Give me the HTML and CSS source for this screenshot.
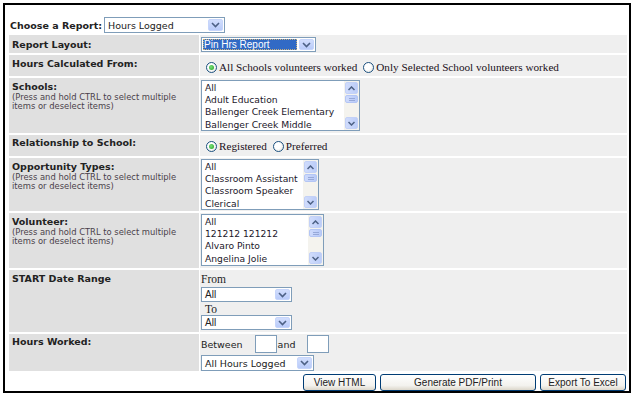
FILE: index.html
```html
<!DOCTYPE html>
<html lang="en">
<head>
    <meta charset="UTF-8">
    <title>Hours Logged Report</title>
    <link rel="stylesheet" href="styles.css">
</head>
<body>
    <div class="frame">
        <div class="choose">
            <span class="choose-label">Choose a Report:</span>
            <div class="dropdown dd-report">
                <span class="dd-value">Hours Logged</span>
                <span class="dd-arrow"><svg width="9" height="6" viewBox="0 0 9 6"><path d="M1 1 L4.5 4.5 L8 1" fill="none" stroke="#4d6185" stroke-width="1.6"/></svg></span>
            </div>
        </div>

        <table class="report-form">
            <colgroup>
                <col class="col-label">
                <col class="col-field">
            </colgroup>
            <tr class="r-layout">
                <th>Report Layout:</th>
                <td>
                    <div class="dropdown dd-layout">
                        <span class="dd-value"><span class="picked">Pin Hrs Report</span></span>
                        <span class="dd-arrow"><svg width="9" height="6" viewBox="0 0 9 6"><path d="M1 1 L4.5 4.5 L8 1" fill="none" stroke="#4d6185" stroke-width="1.6"/></svg></span>
                    </div>
                </td>
            </tr>
            <tr class="r-calc">
                <th>Hours Calculated From:</th>
                <td>
                    <div class="radios">
                        <span class="radio on"></span><span class="radio-text">All Schools volunteers worked</span>
                        <span class="radio"></span><span class="radio-text">Only Selected School volunteers worked</span>
                    </div>
                </td>
            </tr>
            <tr class="r-schools">
                <th>Schools:<span class="hint">(Press and hold CTRL to select multiple items or deselect items)</span></th>
                <td>
                    <div class="listbox lb-schools">
                        <ul class="lb-items">
                            <li>All</li>
                            <li>Adult Education</li>
                            <li>Ballenger Creek Elementary</li>
                            <li>Ballenger Creek Middle</li>
                        </ul>
                        <div class="lb-scroll">
                            <span class="sb-btn"><svg width="7" height="5" viewBox="0 0 7 5"><path d="M0.5 4 L3.5 1 L6.5 4" fill="none" stroke="#4d6185" stroke-width="1.5"/></svg></span>
                            <span class="sb-thumb"></span>
                            <span class="sb-track"></span>
                            <span class="sb-btn"><svg width="7" height="5" viewBox="0 0 7 5"><path d="M0.5 1 L3.5 4 L6.5 1" fill="none" stroke="#4d6185" stroke-width="1.5"/></svg></span>
                        </div>
                    </div>
                </td>
            </tr>
            <tr class="r-rel">
                <th>Relationship to School:</th>
                <td>
                    <div class="radios">
                        <span class="radio on"></span><span class="radio-text">Registered</span>
                        <span class="radio"></span><span class="radio-text">Preferred</span>
                    </div>
                </td>
            </tr>
            <tr class="r-opp">
                <th>Opportunity Types:<span class="hint">(Press and hold CTRL to select multiple items or deselect items)</span></th>
                <td>
                    <div class="listbox lb-opp">
                        <ul class="lb-items">
                            <li>All</li>
                            <li>Classroom Assistant</li>
                            <li>Classroom Speaker</li>
                            <li>Clerical</li>
                        </ul>
                        <div class="lb-scroll">
                            <span class="sb-btn"><svg width="7" height="5" viewBox="0 0 7 5"><path d="M0.5 4 L3.5 1 L6.5 4" fill="none" stroke="#4d6185" stroke-width="1.5"/></svg></span>
                            <span class="sb-thumb"></span>
                            <span class="sb-track"></span>
                            <span class="sb-btn"><svg width="7" height="5" viewBox="0 0 7 5"><path d="M0.5 1 L3.5 4 L6.5 1" fill="none" stroke="#4d6185" stroke-width="1.5"/></svg></span>
                        </div>
                    </div>
                </td>
            </tr>
            <tr class="r-vol">
                <th>Volunteer:<span class="hint">(Press and hold CTRL to select multiple items or deselect items)</span></th>
                <td>
                    <div class="listbox lb-vol">
                        <ul class="lb-items">
                            <li>All</li>
                            <li>121212 121212</li>
                            <li>Alvaro Pinto</li>
                            <li>Angelina Jolie</li>
                        </ul>
                        <div class="lb-scroll">
                            <span class="sb-btn"><svg width="7" height="5" viewBox="0 0 7 5"><path d="M0.5 4 L3.5 1 L6.5 4" fill="none" stroke="#4d6185" stroke-width="1.5"/></svg></span>
                            <span class="sb-thumb"></span>
                            <span class="sb-track"></span>
                            <span class="sb-btn"><svg width="7" height="5" viewBox="0 0 7 5"><path d="M0.5 1 L3.5 4 L6.5 1" fill="none" stroke="#4d6185" stroke-width="1.5"/></svg></span>
                        </div>
                    </div>
                </td>
            </tr>
            <tr class="r-date">
                <th>START Date Range</th>
                <td>
                    <div class="serif-label">From</div>
                    <div class="dropdown dd-date">
                        <span class="dd-value">All</span>
                        <span class="dd-arrow"><svg width="9" height="6" viewBox="0 0 9 6"><path d="M1 1 L4.5 4.5 L8 1" fill="none" stroke="#4d6185" stroke-width="1.6"/></svg></span>
                    </div>
                    <div class="serif-label to">To</div>
                    <div class="dropdown dd-date">
                        <span class="dd-value">All</span>
                        <span class="dd-arrow"><svg width="9" height="6" viewBox="0 0 9 6"><path d="M1 1 L4.5 4.5 L8 1" fill="none" stroke="#4d6185" stroke-width="1.6"/></svg></span>
                    </div>
                </td>
            </tr>
            <tr class="r-hours">
                <th>Hours Worked:</th>
                <td>
                    <div class="between">
                        <span>Between</span>
                        <span class="num-box"></span>
                        <span>and</span>
                        <span class="num-box"></span>
                    </div>
                    <div class="dropdown dd-hours">
                        <span class="dd-value">All Hours Logged</span>
                        <span class="dd-arrow"><svg width="9" height="6" viewBox="0 0 9 6"><path d="M1 1 L4.5 4.5 L8 1" fill="none" stroke="#4d6185" stroke-width="1.6"/></svg></span>
                    </div>
                </td>
            </tr>
        </table>

        <div class="actions">
            <button class="btn btn-html">View HTML</button>
            <button class="btn btn-pdf">Generate PDF/Print</button>
            <button class="btn btn-excel">Export To Excel</button>
        </div>
    </div>
</body>
</html>
```

FILE: styles.css
```css
body {
    margin: 0;
    background-color: #ffffff;
    font-family: "DejaVu Sans", Verdana, sans-serif;
    color: #222;
}

.frame {
    margin: 3px 0 0 3px;
    width: 624px;
    height: 386px;
    border: 2px solid #000;
}

.choose {
    display: flex;
    align-items: center;
    height: 16px;
    padding: 12px 0 0 5px;
}

.choose-label {
    flex: none;
    width: 94px;
    font-size: 9.5px;
    font-weight: bold;
    white-space: nowrap;
}

/* fake XP style dropdowns */
.dropdown {
    display: flex;
    align-items: stretch;
    box-sizing: border-box;
    border: 1px solid #7f9db9;
    background-color: #fff;
    font-size: 9.5px;
    color: #222;
}

.dd-value {
    flex: 1;
    display: flex;
    align-items: center;
    padding-left: 3px;
    white-space: nowrap;
    overflow: hidden;
}

.dd-arrow {
    width: 15px;
    margin: 1px;
    display: flex;
    align-items: center;
    justify-content: center;
    background: linear-gradient(#d2defd, #b9cbf9);
    border: 1px solid #c6d5fb;
    border-radius: 2px;
    box-sizing: border-box;
}

.dd-report {
    width: 121px;
    height: 16px;
}

.dd-layout {
    width: 115px;
    height: 15px;
    font-family: "Liberation Sans", Arial, sans-serif;
    font-size: 10px;
}

.dd-layout .dd-value {
    padding: 1px;
}

.picked {
    display: flex;
    align-items: center;
    width: 100%;
    height: 100%;
    padding-left: 1px;
    background-color: #316ac5;
    color: #fff;
    outline: 1px dotted #c9b07a;
    outline-offset: -1px;
}

.dd-date {
    width: 91px;
    height: 15px;
    font-family: "Liberation Sans", Arial, sans-serif;
    font-size: 10px;
}

.dd-hours {
    width: 113px;
    height: 16px;
}

/* table */
.report-form {
    table-layout: fixed;
    width: 620px;
    margin-left: 3px;
    border-spacing: 1px 2px;
}

.col-label {
    width: 190px;
}

.report-form th {
    box-sizing: border-box;
    background-color: #e0e0e0;
    text-align: left;
    vertical-align: top;
    font-size: 9.5px;
    line-height: 13px;
    font-weight: bold;
    padding: 2px 3px 0;
}

.report-form td {
    box-sizing: border-box;
    background-color: #efefef;
    vertical-align: top;
    padding: 2px 0 0 1px;
}

.hint {
    display: block;
    margin-top: 0;
    font-size: 8.4px;
    line-height: 9px;
    font-weight: normal;
    color: #4a3f4a;
}

.r-layout th, .r-layout td { height: 18px; }
.r-calc th, .r-calc td { height: 21px; }
.r-schools th, .r-schools td { height: 55px; }
.r-rel th, .r-rel td { height: 21px; }
.r-opp th, .r-opp td { height: 53px; }
.r-vol th, .r-vol td { height: 55px; }
.r-date th, .r-date td { height: 62px; }
.r-hours th, .r-hours td { height: 37px; }

.r-layout th { padding-top: 3px; }
.r-rel th, .r-hours th { padding-top: 1px; }

.r-calc td { padding: 5px 0 0 6px; }
.r-rel td { padding: 4px 0 0 6px; }
.r-opp td, .r-vol td, .r-hours td { padding-top: 1px; }
.r-date td { padding-top: 3px; }

/* radios */
.radios {
    display: flex;
    align-items: center;
    height: 14px;
    font-family: "Liberation Serif", "Times New Roman", serif;
    font-size: 11.2px;
    color: #1a1020;
}

.radio {
    flex: none;
    width: 11px;
    height: 11px;
    border: 1px solid #1c5180;
    border-radius: 50%;
    box-sizing: border-box;
    background: radial-gradient(circle at 40% 40%, #fff 40%, #dcdcd6);
    display: flex;
    align-items: center;
    justify-content: center;
    margin-right: 2px;
}

.radio.on::after {
    content: "";
    width: 5px;
    height: 5px;
    border-radius: 50%;
    background: radial-gradient(circle at 40% 40%, #7be07b, #21a121);
}

.radio-text {
    margin-right: 6px;
}

/* listboxes */
.listbox {
    display: flex;
    box-sizing: border-box;
    border: 1px solid #7f9db9;
    background-color: #fff;
}

.lb-schools { width: 159px; height: 51px; }
.lb-opp { width: 118px; height: 51px; }
.lb-vol { width: 123px; height: 52px; }

.lb-items {
    flex: 1;
    list-style: none;
    margin: 0;
    padding: 1px 3px 0;
    font-size: 9.2px;
    line-height: 12.2px;
    white-space: nowrap;
    overflow: hidden;
    color: #22172a;
}

.lb-scroll {
    width: 13px;
    display: flex;
    flex-direction: column;
    padding: 1px;
    background-color: #f4f3ee;
}

.sb-btn {
    height: 12px;
    display: flex;
    align-items: center;
    justify-content: center;
    background: linear-gradient(90deg, #d0dcfc, #bccdf8);
    border: 1px solid #c3d1f7;
    border-radius: 2px;
    box-sizing: border-box;
}

.sb-thumb {
    height: 8px;
    margin-top: 1px;
    background:
        linear-gradient(#97a9d8, #97a9d8) center 2px / 6px 1px no-repeat,
        linear-gradient(#97a9d8, #97a9d8) center 4px / 6px 1px no-repeat,
        linear-gradient(90deg, #cfdbfc, #b8caf8);
    border: 1px solid #b4c6f5;
    border-radius: 2px;
    box-sizing: border-box;
}

.sb-track {
    flex: 1;
}

/* date range */
.serif-label {
    font-family: "Liberation Serif", "Times New Roman", serif;
    font-size: 11.5px;
    line-height: 12px;
    margin-bottom: 2px;
}

.serif-label.to {
    margin: 1px 0 0;
    padding-left: 4px;
}

/* hours worked */
.between {
    display: flex;
    align-items: center;
    font-size: 9.5px;
    margin-bottom: 2px;
}

.num-box {
    width: 22px;
    height: 18px;
    border: 1px solid #7f9db9;
    background-color: #fff;
    box-sizing: border-box;
    margin: 0 1px 0 12px;
}

.num-box:last-child {
    margin-left: 12px;
}

/* buttons */
.actions {
    display: flex;
    justify-content: flex-end;
    gap: 4px;
    padding-right: 3px;
    margin-top: 1px;
}

.btn {
    height: 17px;
    padding: 0;
    font-family: "Liberation Sans", Arial, sans-serif;
    font-size: 10px;
    color: #222;
    border: 1px solid #003c74;
    border-radius: 3px;
    background: linear-gradient(#ffffff, #f3f2ee 70%, #dcd7cb);
    cursor: pointer;
}

.btn-html { width: 73px; }
.btn-pdf { width: 156px; }
.btn-excel { width: 86px; }
```
